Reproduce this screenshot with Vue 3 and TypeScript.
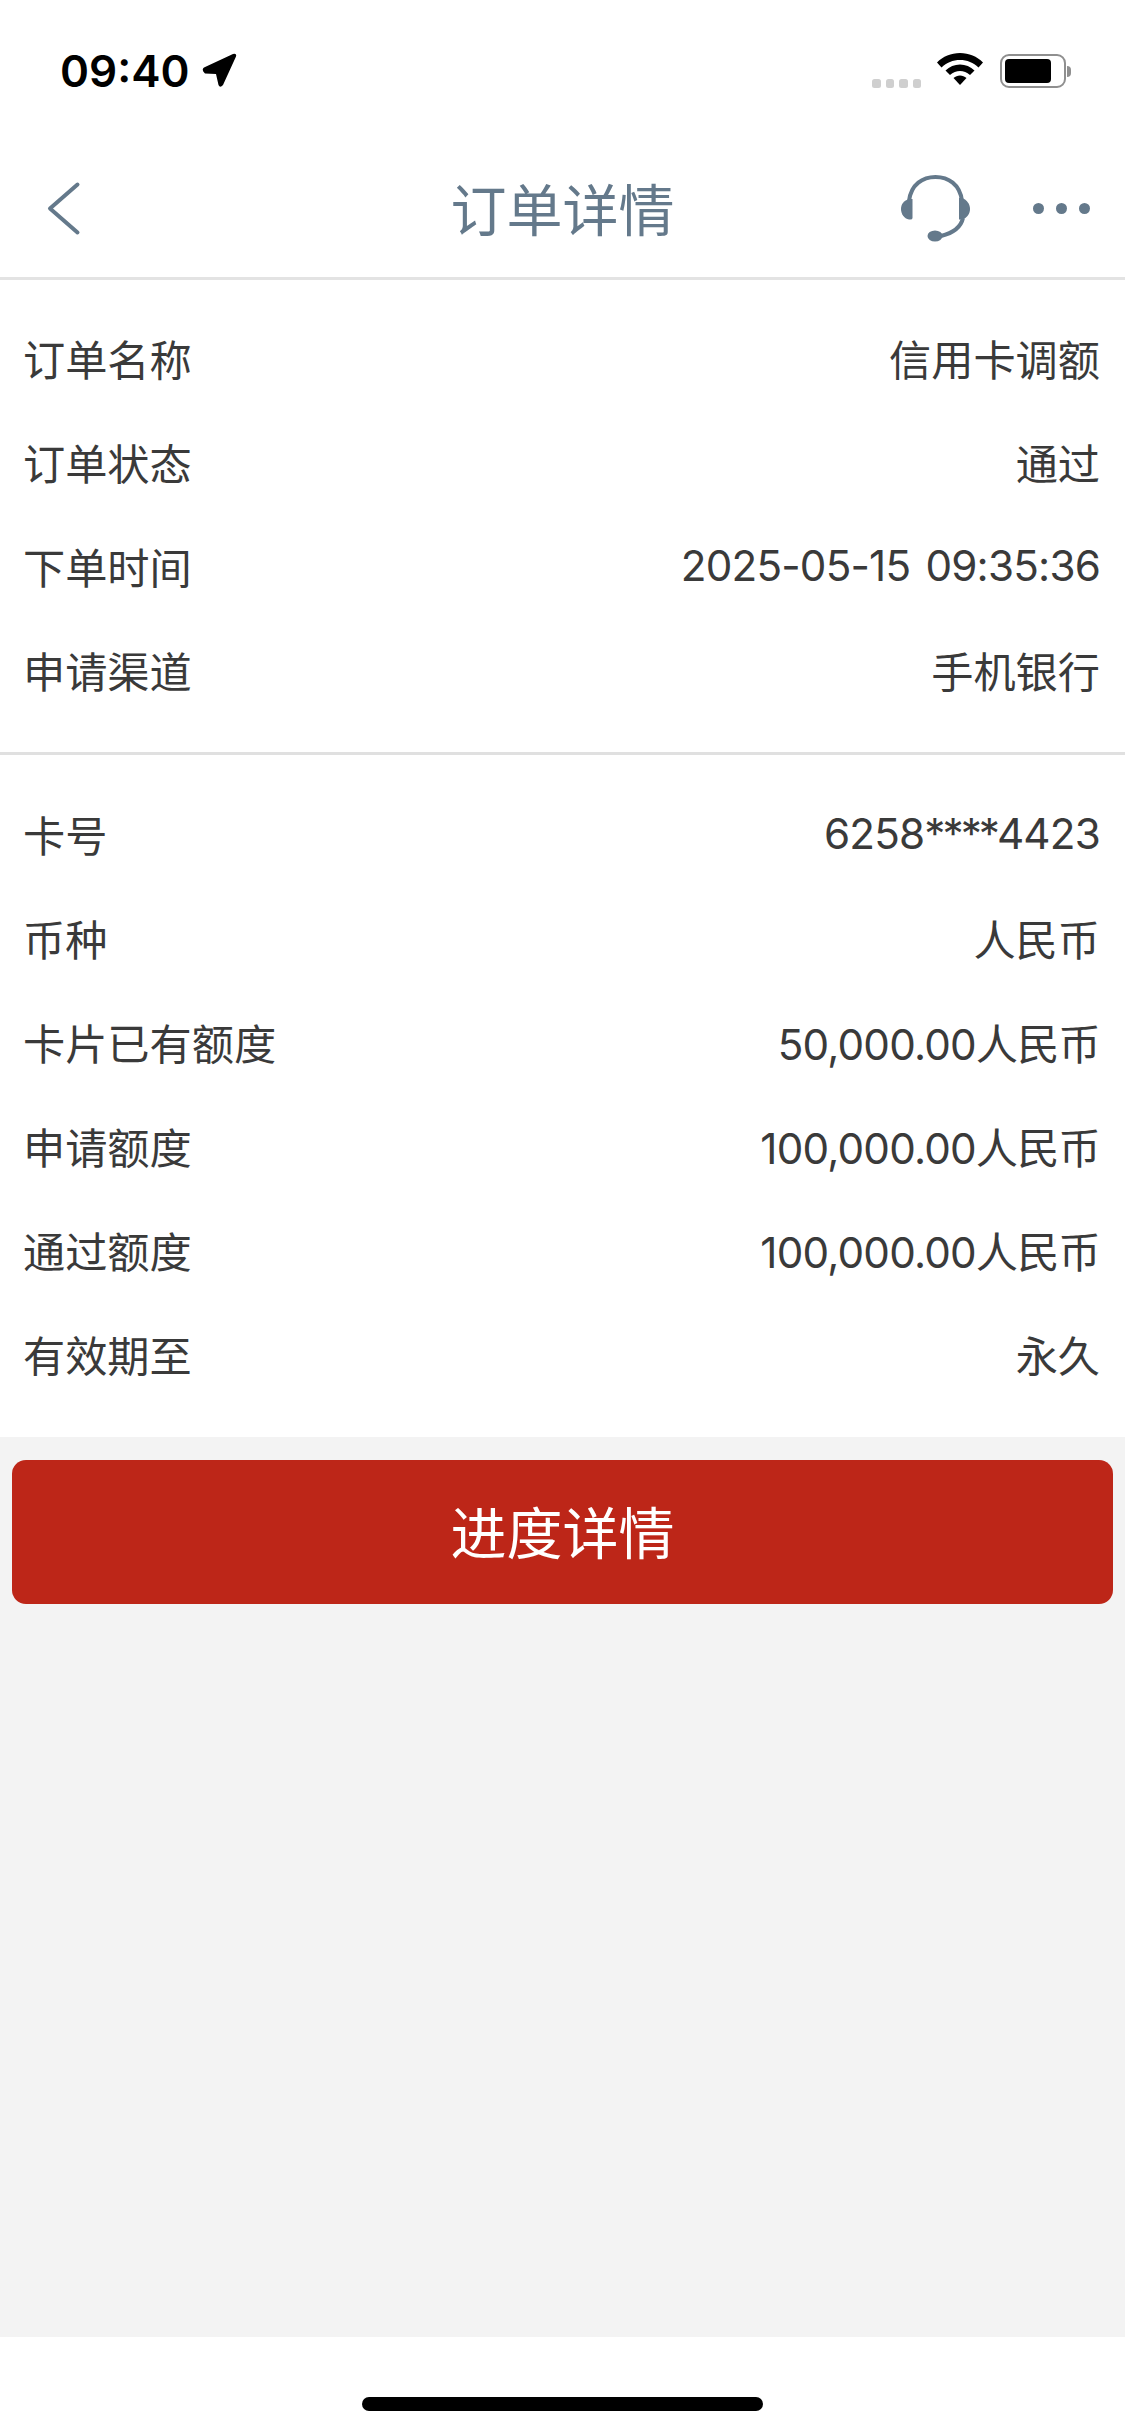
<script setup lang="ts">
interface Row {
  label: string
  value: string
}

const orderRows: Row[] = [
  { label: '订单名称', value: '信用卡调额' },
  { label: '订单状态', value: '通过' },
  { label: '下单时间', value: '2025-05-15 09:35:36' },
  { label: '申请渠道', value: '手机银行' },
]

const cardRows: Row[] = [
  { label: '卡号', value: '6258****4423' },
  { label: '币种', value: '人民币' },
  { label: '卡片已有额度', value: '50,000.00人民币' },
  { label: '申请额度', value: '100,000.00人民币' },
  { label: '通过额度', value: '100,000.00人民币' },
  { label: '有效期至', value: '永久' },
]

const sections = [orderRows, cardRows]

// masked card digits get their own span, the stars are wider in Inter
function valueParts(value: string) {
  return value.split(/(\*+)/).filter(Boolean)
}
</script>

<template>
  <div class="page">
    <div class="status-bar">
      <div class="status-left">
        <span class="clock">09:40</span>
        <svg class="loc" width="35" height="35" viewBox="0 0 35 35">
          <path d="M2 14.500 L31 1 Q35 0 34 3.500 L21 32 Q18 35.500 16.500 32 L14 21 L3 20.500 Q-1 17 2 14.500 Z" fill="#000" />
        </svg>
      </div>
      <div class="status-right">
        <div class="signal"><i></i><i></i><i></i><i></i></div>
        <svg class="wifi" width="48" height="36" viewBox="0 0 48 36">
          <path d="M24 3 C33 3 41 6.500 47 12.500 L42.500 17.500 C37.500 12.500 31 10 24 10 C17 10 10.500 12.500 5.500 17.500 L1 12.500 C7 6.500 15 3 24 3 Z" fill="#000" />
          <path d="M24 14.500 C29.500 14.500 34.500 16.500 38.500 20.500 L34 25 C31 22.500 27.500 21 24 21 C20.500 21 17 22.500 14 25 L9.500 20.500 C13.500 16.500 18.500 14.500 24 14.500 Z" fill="#000" />
          <path d="M24 25.500 C26.500 25.500 28.500 26.500 30.500 28 L24 35 L17.500 28 C19.500 26.500 21.500 25.500 24 25.500 Z" fill="#000" />
        </svg>
        <div class="battery">
          <div class="battery-body"><div class="battery-fill"></div></div>
          <div class="battery-cap"></div>
        </div>
      </div>
    </div>

    <header class="nav">
      <svg class="back" width="36" height="56" viewBox="0 0 36 56">
        <path d="M31.500 3.500 L4 27.500 L31.500 51.500" fill="none" stroke="#64798b" stroke-width="4" stroke-linecap="round" stroke-linejoin="round" />
      </svg>
      <h1 class="title">订单详情</h1>
      <div class="nav-actions">
        <svg class="headset" width="69" height="68" viewBox="0 0 69 68">
          <path d="M8 26 C10 9 22 2 34.500 2 C47 2 59 9 61 26" fill="none" stroke="#64798b" stroke-width="4" />
          <path d="M11.500 24 L11.500 43 Q11.500 45 8 44.500 C3 43.500 0 39 0 34 C0 29 3 25.500 8 24 Z" fill="#64798b" />
          <path d="M58 23 L61 23 C66 25 69 29 69 34 C69 39 66 43 61 44.500 L58 44.500 Z" fill="#64798b" />
          <path d="M62 43 C60 52 52 58 40 61" fill="none" stroke="#64798b" stroke-width="4" />
          <ellipse cx="34" cy="61" rx="7.500" ry="5.500" fill="#64798b" />
        </svg>
        <div class="more"><i></i><i></i><i></i></div>
      </div>
    </header>

    <section v-for="(rows, i) in sections" :key="i" class="section">
      <div v-for="row in rows" :key="row.label" class="row">
        <span class="label">{{ row.label }}</span>
        <span class="value" :class="{ num: /^\d/.test(row.value) }">
          <template v-for="part in valueParts(row.value)" :key="part">
            <span v-if="part.startsWith('*')" class="mask">{{ part }}</span>
            <template v-else>{{ part }}</template>
          </template>
        </span>
      </div>
    </section>

    <main class="body">
      <button class="progress-btn">进度详情</button>
    </main>

    <footer class="home">
      <div class="home-bar"></div>
    </footer>
  </div>
</template>

<style>
html,
body {
  margin: 0;
  background: #fff;
}
</style>

<style scoped>
.page {
  width: 1125px;
  height: 2435px;
  display: flex;
  flex-direction: column;
  background: #fff;
  font-family: Inter, "Noto Sans CJK SC", sans-serif;
  overflow: hidden;
}

.status-bar {
  height: 140px;
  flex-shrink: 0;
  display: flex;
  justify-content: space-between;
  align-items: flex-start;
}

.status-left {
  display: flex;
  align-items: center;
  margin: 50px 0 0 60px;
  height: 42px;
}

.clock {
  font-family: Inter, "Liberation Sans", sans-serif;
  font-size: 44px;
  font-weight: 600;
  color: #000;
  line-height: 42px;
}

.loc {
  margin-left: 12px;
  margin-top: -1px;
}

.status-right {
  display: flex;
  align-items: flex-start;
  margin: 52px 0 0 0;
  padding-right: 54px;
}

.signal {
  display: flex;
  gap: 5px;
  margin: 27px 0 0 0;
}

.signal i {
  width: 8.500px;
  height: 8.500px;
  background: #cfcfcf;
  border-radius: 2.500px;
}

.wifi {
  margin: -2px 0 0 15px;
}

.battery {
  display: flex;
  align-items: center;
  margin: 2px 0 0 16px;
}

.battery-body {
  width: 66px;
  height: 34px;
  box-sizing: border-box;
  border: 2.500px solid #8f8f8f;
  border-radius: 9px;
  padding: 3px;
  background: #fff;
}

.battery-fill {
  width: 46px;
  height: 100%;
  background: #000;
  border-radius: 4px;
}

.battery-cap {
  width: 4px;
  height: 11px;
  background: #8f8f8f;
  border-radius: 0 4px 4px 0;
  margin-left: 1px;
}

.nav {
  height: 140px;
  flex-shrink: 0;
  box-sizing: border-box;
  border-bottom: 3px solid #e3e3e3;
  position: relative;
  display: flex;
  align-items: center;
  justify-content: space-between;
  padding: 0 35px 0 46px;
}

.title {
  position: absolute;
  left: 0;
  right: 0;
  text-align: center;
  margin: 0 0 5px;
  font-size: 56px;
  font-weight: 400;
  color: #64798b;
  pointer-events: none;
}

.nav-actions {
  display: flex;
  align-items: center;
}

.more {
  display: flex;
  gap: 12px;
  margin-left: 63px;
}

.more i {
  width: 11px;
  height: 11px;
  border-radius: 50%;
  background: #64798b;
}

.section {
  flex-shrink: 0;
  padding: 28px 0;
  border-bottom: 3px solid #e0e0e0;
}

.section:last-of-type {
  border-bottom: none;
  padding-top: 29px;
  padding-bottom: 29px;
}

.row {
  height: 104px;
  box-sizing: border-box;
  display: flex;
  align-items: center;
  justify-content: space-between;
  padding: 0 25px 5px 23px;
  font-size: 42.200px;
  color: #3a3a3a;
}

.value.num {
  letter-spacing: -0.800px;
  word-spacing: 4px;
}

.mask {
  letter-spacing: -3px;
}

.body {
  flex: 1;
  background: #f3f3f3;
  padding: 23px 12px 0;
}

.progress-btn {
  display: block;
  width: 100%;
  height: 144px;
  border: none;
  border-radius: 14px;
  padding: 0 0 5px;
  background: #bd2618;
  color: #fff;
  font-family: inherit;
  font-size: 56px;
}

.home {
  height: 98px;
  flex-shrink: 0;
  background: #fff;
  display: flex;
  justify-content: center;
  padding-top: 60px;
  box-sizing: border-box;
}

.home-bar {
  width: 401px;
  height: 14px;
  border-radius: 7px;
  background: #000;
}
</style>
